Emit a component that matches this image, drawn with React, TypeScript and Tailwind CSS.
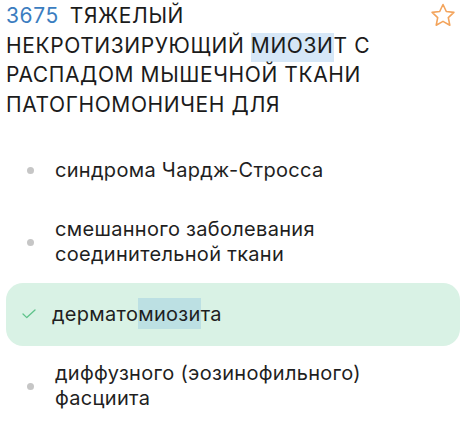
import React from 'react';

type Option = {
  id: number;
  parts: { text: string; mark?: boolean }[];
  correct?: boolean;
};

const OPTIONS: Option[] = [
  { id: 1, parts: [{ text: 'синдрома Чардж-Стросса' }] },
  { id: 2, parts: [{ text: 'смешанного заболевания соединительной ткани' }] },
  {
    id: 3,
    correct: true,
    parts: [{ text: 'дермато' }, { text: 'миози', mark: true }, { text: 'та' }],
  },
  { id: 4, parts: [{ text: 'диффузного (эозинофильного) фасциита' }] },
];

const Star = () => (
  <svg width="26" height="25" viewBox="0 0 26 25" fill="none" stroke="#f3a45c" strokeWidth="1.6" strokeLinejoin="round">
    <path d="M13 1.5l3.3 7 7.6.9-5.6 5.2 1.5 7.6L13 18.4l-6.8 3.8 1.5-7.6-5.6-5.2 7.6-.9z" />
  </svg>
);

const Check = () => (
  <svg width="14" height="10" viewBox="0 0 14 10" fill="none" stroke="#5fc38b" strokeWidth="1.3" strokeLinecap="round" strokeLinejoin="round">
    <path d="M1 5l3.8 3.6L13 1" />
  </svg>
);

export default function App() {
  return (
    <div className="w-[466px] h-[434px] bg-white overflow-hidden font-['Inter',sans-serif] text-[#1b1b1b]">
      {/* question header */}
      <div className="flex items-start pl-[6px] pr-[10px] pt-[1px]">
        <p className="flex-1 text-[21px] leading-[29.6px] uppercase tracking-[0.6px]">
          <span className="text-[#3b7dc0] mr-[11px]">3675</span>
          ТЯЖЕЛЫЙ НЕКРОТИЗИРУЮЩИЙ <span className="bg-[#d6e7f7] pb-[4px]">МИОЗИ</span>Т С РАСПАДОМ МЫШЕЧНОЙ ТКАНИ ПАТОГНОМОНИЧЕН ДЛЯ
        </p>
        <div className="pt-[2px] pl-[10px]">
          <Star />
        </div>
      </div>

      {/* answers */}
      <ul className="mt-[19.6px] flex flex-col gap-[9px] px-[6px]">
        {OPTIONS.map((o) => (
          <li
            key={o.id}
            className={
              'flex items-center min-h-[63px] pl-[16px] pr-[12px] rounded-[17px] ' +
              (o.correct ? 'bg-[#d9f2e5]' : '')
            }
          >
            {o.correct ? (
              <div className="w-[30px] shrink-0 flex items-center">
                <Check />
              </div>
            ) : (
              <div className="w-[33px] shrink-0 flex items-center">
                <span className="ml-[4.5px] w-[7px] h-[7px] rounded-full bg-[#c6c6c6]" />
              </div>
            )}
            <span className="text-[20px] leading-[25px] tracking-[0.3px] text-[#1f1f1f]">
              {o.parts.map((p, i) =>
                p.mark ? (
                  <span key={i} className="bg-[#bce0e3] py-[3.5px]">{p.text}</span>
                ) : (
                  <span key={i}>{p.text}</span>
                )
              )}
            </span>
          </li>
        ))}
      </ul>
    </div>
  );
}
